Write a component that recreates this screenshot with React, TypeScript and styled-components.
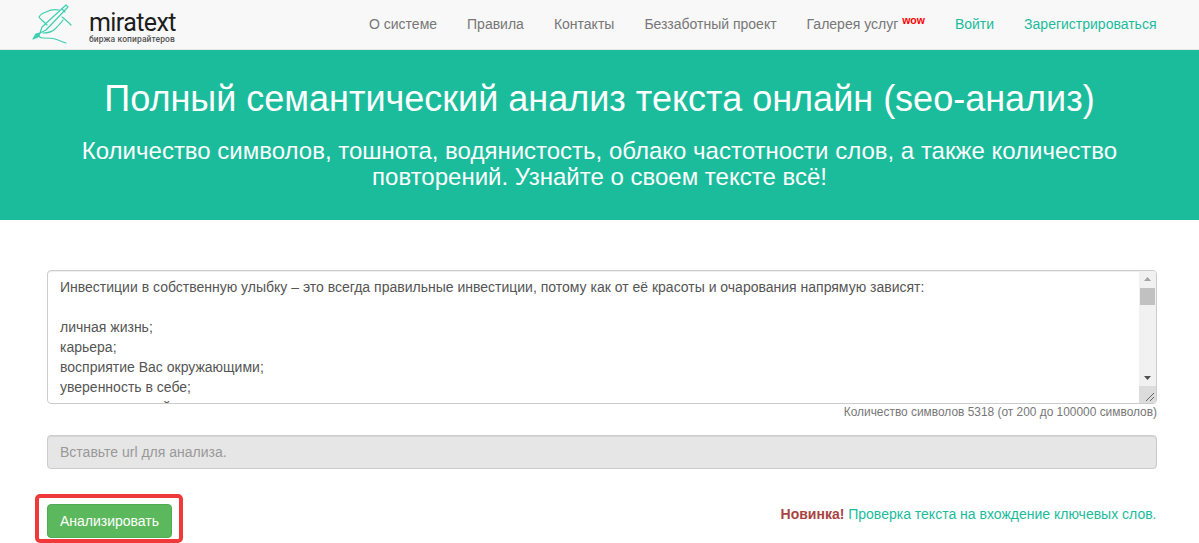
import React from 'react';
import styled, { createGlobalStyle } from 'styled-components';

const GlobalStyle = createGlobalStyle`
  html, body {
    margin: 0;
    padding: 0;
    background: #fff;
    overflow: hidden;
  }
  body {
    font-family: "Liberation Sans", Arial, sans-serif;
    font-size: 14px;
    line-height: 20px;
    color: #333;
  }
  * {
    box-sizing: border-box;
  }
`;

const Page = styled.div`
  width: 1199px;
  height: 543px;
  overflow: hidden;
`;

const Navbar = styled.header`
  height: 50px;
  background: #f8f8f8;
  border-bottom: 1px solid #e7e7e7;
  display: flex;
  align-items: center;
  justify-content: space-between;
  padding: 0 42.5px 0 29px;
`;

const Brand = styled.a`
  display: flex;
  align-items: flex-start;
  gap: 16px;
  height: 49px;
  padding-top: 4px;
`;

const BrandText = styled.div`
  display: flex;
  flex-direction: column;
  padding-top: 7px;
`;

const BrandName = styled.span`
  font-family: "Roboto", sans-serif;
  font-size: 25px;
  line-height: 24px;
  letter-spacing: -0.6px;
  color: #1d1d1d;
`;

const BrandTag = styled.span`
  font-family: "Roboto", sans-serif;
  font-size: 8.5px;
  line-height: 9px;
  font-weight: 500;
  letter-spacing: 0.1px;
  color: #555;
`;

const Nav = styled.nav`
  display: flex;
  gap: 30px;
  padding-bottom: 1px;
`;

const NavItem = styled.a<{ $accent?: boolean }>`
  color: ${props => (props.$accent ? '#1abc9c' : '#777')};
  text-decoration: none;
  white-space: nowrap;
`;

const Wow = styled.sup`
  font-size: 10.5px;
  line-height: 0;
  font-weight: 700;
  color: #f00;
  vertical-align: 5px;
`;

const Hero = styled.section`
  height: 170px;
  background: #1abc9c;
  color: #fff;
  text-align: center;
  padding: 27px 60px 0;
`;

const HeroTitle = styled.h1`
  margin: 0 0 17px;
  font-size: 36px;
  line-height: 44px;
  font-weight: 400;
`;

const HeroLead = styled.p`
  margin: 0;
  font-size: 24px;
  line-height: 26px;
  font-weight: 400;
`;

const Content = styled.main`
  padding: 50px 42px 0 47px;
`;

const TextBox = styled.div`
  height: 134px;
  display: flex;
  background: #fff;
  border: 1px solid #ccc;
  border-radius: 4px;
  box-shadow: inset 0 1px 1px rgba(0, 0, 0, 0.075);
  overflow: hidden;
`;

const TextBody = styled.div`
  flex: 1;
  min-width: 0;
  padding: 6px 12px;
  line-height: 20px;
  font-size: 14px;
  color: #555;
  white-space: pre;
  overflow: hidden;
`;

const Scrollbar = styled.div`
  width: 17px;
  display: flex;
  flex-direction: column;
  align-items: center;
  background: #f1f1f1;
`;

const ScrollArrow = styled.svg`
  width: 17px;
  height: 17px;
  flex-shrink: 0;
`;

const ScrollTrack = styled.div`
  flex: 1;
  width: 100%;
  padding: 0 1px;
`;

const ScrollThumb = styled.div`
  height: 17px;
  background: #c1c1c1;
`;

const ResizeCorner = styled.svg`
  width: 17px;
  height: 17px;
  flex-shrink: 0;
  background: #dcdcdc;
`;

const Counter = styled.div`
  text-align: right;
  font-size: 11.92px;
  line-height: 17px;
  color: #777;
`;

const UrlInput = styled.input`
  display: block;
  width: 100%;
  height: 34px;
  margin-top: 14px;
  padding: 6px 12px;
  font-family: inherit;
  font-size: 14px;
  background: #e6e6e6;
  border: 1px solid #ccc;
  border-radius: 4px;
  box-shadow: inset 0 1px 1px rgba(0, 0, 0, 0.075);

  &::placeholder {
    color: #999;
    opacity: 1;
  }
`;

const ActionRow = styled.div`
  display: flex;
  align-items: flex-start;
  justify-content: space-between;
  margin: 25px 0 0 -12px;
`;

const Highlight = styled.div`
  width: 148px;
  height: 49px;
  padding: 6px 0 0 8px;
  border: 4px solid #f03a3a;
  border-radius: 5px;
`;

const AnalyzeButton = styled.button`
  display: block;
  width: 125px;
  height: 34px;
  padding: 0;
  font-family: inherit;
  font-size: 14px;
  color: #fff;
  background: #5cb85c;
  border: 1px solid #4cae4c;
  border-radius: 4px;
`;

const Promo = styled.div`
  margin: 10px 0.5px 0 0;
  color: #1abc9c;
`;

const PromoBadge = styled.strong`
  color: #a94442;
`;

const LogoMark = () => (
  <svg width="44" height="42" viewBox="0 0 44 42" fill="none" stroke="#3fcfb0" strokeWidth="1.2" strokeLinecap="round" strokeLinejoin="round">
    {/* pen */}
    <path d="M37 1 L39 3 L17 26 L11 29 L13 23 Z" />
    <path d="M33 5 L36 8" />
    {/* nib */}
    <path d="M11 29 L7 30 L4 35 L9 33 L11 29" fill="#3fcfb0" />
    {/* hand */}
    <path d="M30 6 C25 5 21 6 17 8 C14 9 11 11 10 13 C11 15 13 16 15 18 L18 21" />
    <path d="M33 13 C36 15 39 18 42 21" />
    <path d="M14 29 C19 29 23 28 26 25 C29 22 32 19 34 16" />
    <path d="M10 31 C10 33 11 34 14 34 C18 34 22 34 26 35 C30 36 33 38 37 39" />
  </svg>
);

const text = `Инвестиции в собственную улыбку – это всегда правильные инвестиции, потому как от её красоты и очарования напрямую зависят:

личная жизнь;
карьера;
восприятие Вас окружающими;
уверенность в себе;
индивидуальный стиль;`;

const App: React.FC = () => {
  return (
    <Page>
      <GlobalStyle />
      <Navbar>
        <Brand>
          <LogoMark />
          <BrandText>
            <BrandName>miratext</BrandName>
            <BrandTag>биржа копирайтеров</BrandTag>
          </BrandText>
        </Brand>
        <Nav>
          <NavItem>О системе</NavItem>
          <NavItem>Правила</NavItem>
          <NavItem>Контакты</NavItem>
          <NavItem>Беззаботный проект</NavItem>
          <NavItem>
            Галерея услуг <Wow>wow</Wow>
          </NavItem>
          <NavItem $accent>Войти</NavItem>
          <NavItem $accent>Зарегистрироваться</NavItem>
        </Nav>
      </Navbar>
      <Hero>
        <HeroTitle>Полный семантический анализ текста онлайн (seo-анализ)</HeroTitle>
        <HeroLead>
          Количество символов, тошнота, водянистость, облако частотности слов, а также количество
          повторений. Узнайте о своем тексте всё!
        </HeroLead>
      </Hero>
      <Content>
        <TextBox>
          <TextBody>{text}</TextBody>
          <Scrollbar>
            <ScrollArrow viewBox="0 0 17 17">
              <path d="M5 10 L8.5 6 L12 10 Z" fill="#a3a3a3" />
            </ScrollArrow>
            <ScrollTrack>
              <ScrollThumb />
            </ScrollTrack>
            <ScrollArrow viewBox="0 0 17 17">
              <path d="M5 7 L12 7 L8.5 11 Z" fill="#505050" />
            </ScrollArrow>
            <ResizeCorner viewBox="0 0 17 17">
              <path d="M7 15 L15 7 M11 15 L15 11" stroke="#666" strokeWidth="1" />
            </ResizeCorner>
          </Scrollbar>
        </TextBox>
        <Counter>Количество символов 5318 (от 200 до 100000 символов)</Counter>
        <UrlInput placeholder="Вставьте url для анализа." />
        <ActionRow>
          <Highlight>
            <AnalyzeButton>Анализировать</AnalyzeButton>
          </Highlight>
          <Promo>
            <PromoBadge>Новинка!</PromoBadge> Проверка текста на вхождение ключевых слов.
          </Promo>
        </ActionRow>
      </Content>
    </Page>
  );
};

export default App;
